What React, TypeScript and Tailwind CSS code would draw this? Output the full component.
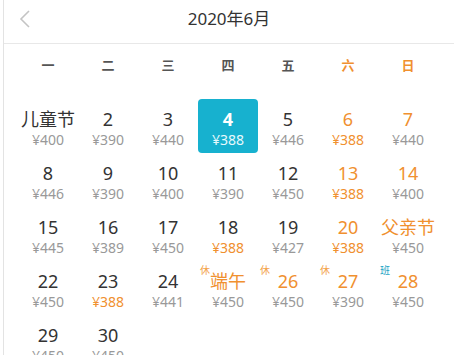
import React from 'react';

type Day = {
  label: string;
  price: string;
  orange?: boolean;
  cheap?: boolean;
  mark?: 'rest' | 'work';
  selected?: boolean;
};

const days: (Day | null)[] = [
  { label: '儿童节', price: '¥400' },
  { label: '2', price: '¥390' },
  { label: '3', price: '¥440' },
  { label: '4', price: '¥388', selected: true },
  { label: '5', price: '¥446' },
  { label: '6', price: '¥388', orange: true, cheap: true },
  { label: '7', price: '¥440', orange: true },
  { label: '8', price: '¥446' },
  { label: '9', price: '¥390' },
  { label: '10', price: '¥400' },
  { label: '11', price: '¥390' },
  { label: '12', price: '¥450' },
  { label: '13', price: '¥388', orange: true, cheap: true },
  { label: '14', price: '¥400', orange: true },
  { label: '15', price: '¥445' },
  { label: '16', price: '¥389' },
  { label: '17', price: '¥450' },
  { label: '18', price: '¥388', cheap: true },
  { label: '19', price: '¥427' },
  { label: '20', price: '¥388', orange: true, cheap: true },
  { label: '父亲节', price: '¥450', orange: true },
  { label: '22', price: '¥450' },
  { label: '23', price: '¥388', cheap: true },
  { label: '24', price: '¥441' },
  { label: '端午', price: '¥450', orange: true, mark: 'rest' },
  { label: '26', price: '¥450', orange: true, mark: 'rest' },
  { label: '27', price: '¥390', orange: true, mark: 'rest' },
  { label: '28', price: '¥450', orange: true, mark: 'work' },
  { label: '29', price: '¥450' },
  { label: '30', price: '¥450' },
];

const weekdays = ['一', '二', '三', '四', '五', '六', '日'];

function Cell({ d }: { d: Day | null }) {
  if (!d) return <div className="h-[54px]" />;
  if (d.selected) {
    return (
      <div className="h-[54px] rounded-[4px] bg-[#17b1cf] flex flex-col items-center pt-[9px] text-white">
        <div className="text-[18px] leading-[22px] font-bold">{d.label}</div>
        <div className="text-[14px] leading-[16px] mt-[2px] text-[#e8f9fd]">{d.price}</div>
      </div>
    );
  }
  return (
    <div className="relative h-[54px] flex flex-col items-center pt-[9px]">
      {d.mark === 'rest' && (
        <span className="absolute left-[2px] top-[3px] text-[10px] leading-[12px] text-[#f3a44c]">休</span>
      )}
      {d.mark === 'work' && (
        <span className="absolute left-[2px] top-[3px] text-[10px] leading-[12px] text-[#1aa3c4]">班</span>
      )}
      <div className={`text-[18px] leading-[22px] ${d.orange ? 'text-[#f0902f]' : 'text-[#333333]'}`}>
        {d.label}
      </div>
      <div className={`text-[14px] leading-[16px] mt-[2px] ${d.cheap ? 'text-[#f0902f]' : 'text-[#999999]'}`}>
        {d.price}
      </div>
    </div>
  );
}

export default function App() {
  return (
    <div
      className="h-[355px] overflow-hidden bg-white ml-[3px] border-l border-[#e3e3e3]"
      style={{ fontFamily: '"Noto Sans", "Noto Sans CJK SC", sans-serif' }}
    >
      <div className="relative h-[44px] border-b border-[#e8e8e8] flex items-center justify-center">
        <svg
          className="absolute left-[14px] top-[9px]"
          width="14"
          height="20"
          viewBox="0 0 14 20"
          fill="none"
          stroke="#c4c4c4"
          strokeWidth="1.6"
        >
          <path d="M11 2 L3 10 L11 18" />
        </svg>
        <span className="text-[17px] text-[#333333] leading-none -mt-[6px]">2020年6月</span>
      </div>
      <div className="px-[14px]">
        <div className="grid grid-cols-7 w-[420px] h-[43px] items-center">
          {weekdays.map((w, i) => (
            <div
              key={w}
              className={`text-center text-[13px] font-bold ${i >= 5 ? 'text-[#f0902f]' : 'text-[#555555]'}`}
            >
              {w}
            </div>
          ))}
        </div>
        <div className="grid grid-cols-7 w-[420px] pt-[12px]">
          {days.map((d, i) => (
            <Cell key={i} d={d} />
          ))}
        </div>
      </div>
    </div>
  );
}
